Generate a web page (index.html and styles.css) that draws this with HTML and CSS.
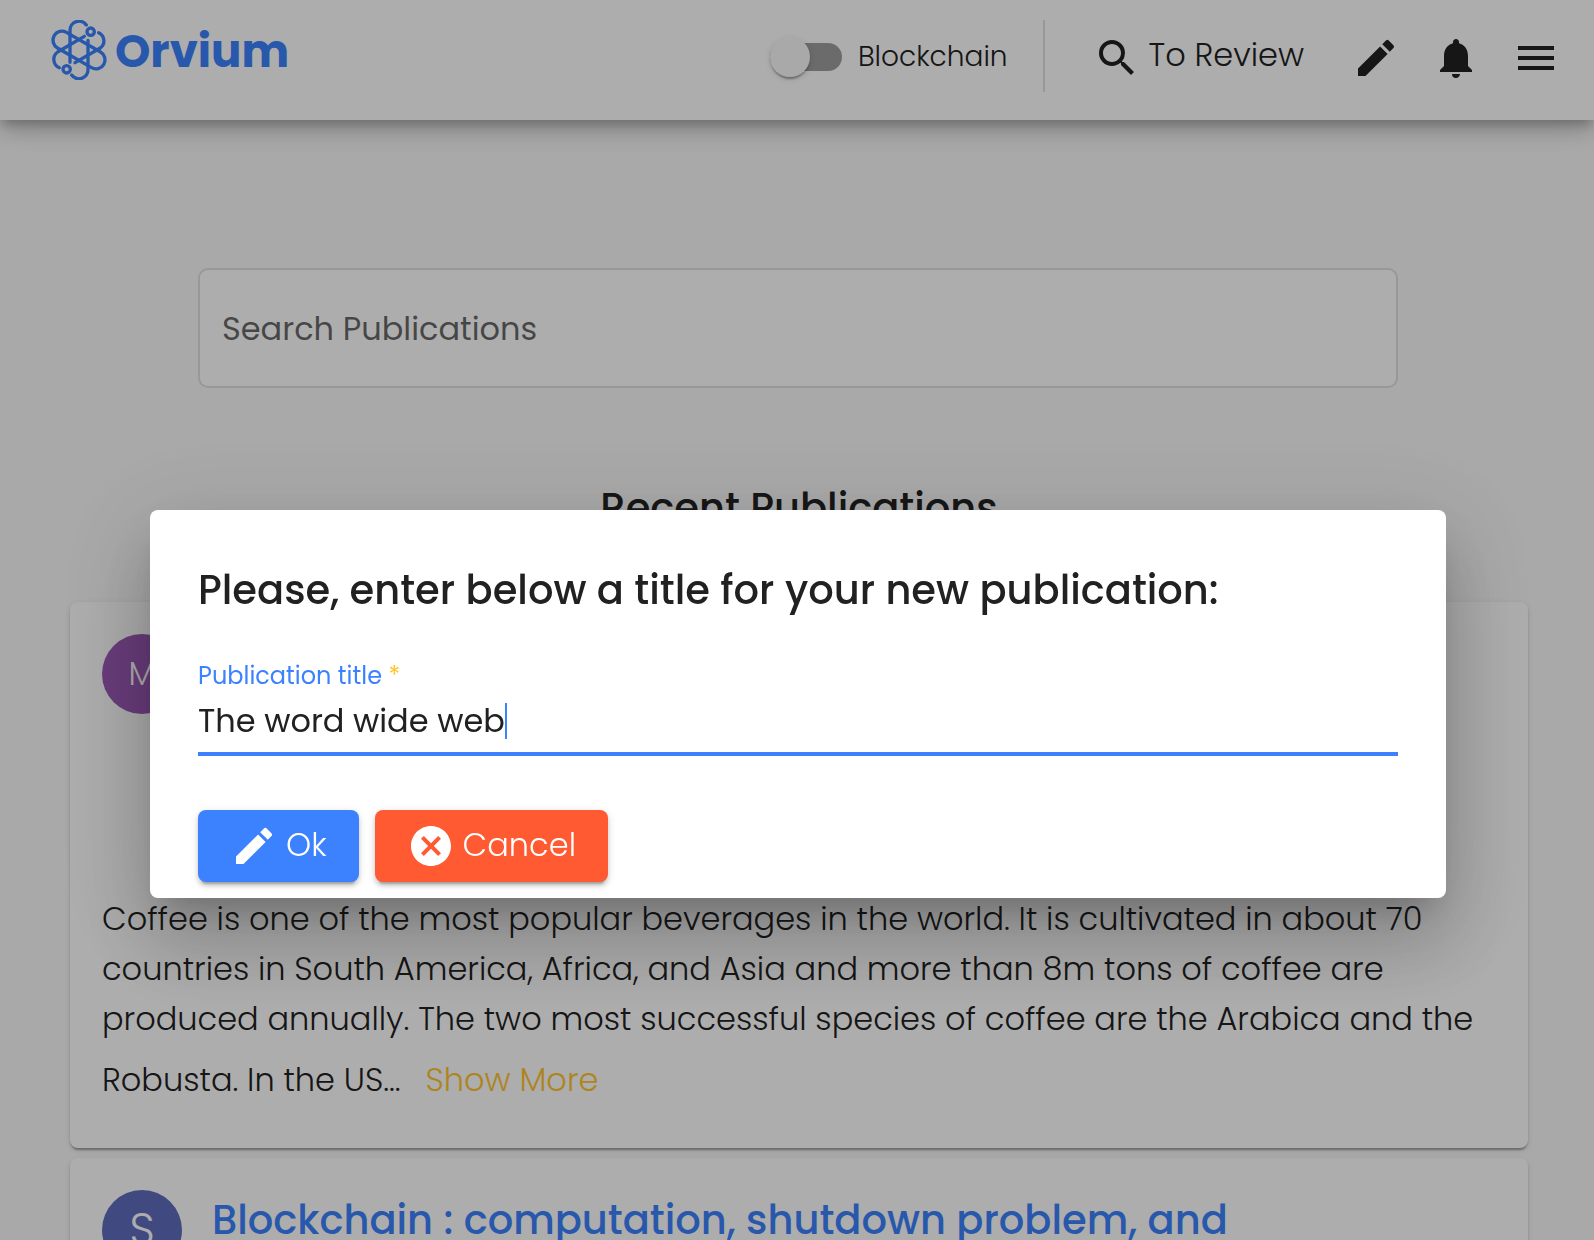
FILE: index.html
```html
<!DOCTYPE html>
<html lang="en">
<head>
    <meta charset="UTF-8">
    <meta name="viewport" content="width=device-width, initial-scale=1.0">
    <title>Orvium</title>
    <link rel="stylesheet" href="styles.css">
</head>
<body>

<header class="toolbar">
    <a class="logo" href="#">
        <svg class="logo-mark" viewBox="-90 -90 180 180" aria-hidden="true">
            <rect x="-86" y="-27" width="172" height="54" rx="27" transform="rotate(30)"/>
            <path d="M22 -75A27 27 0 0 0 -27 -59V37M-22 75A27 27 0 0 0 27 59V-29"/>
            <path d="M59 -52A27 27 0 0 1 64 -6L-12 38M-59 53A27 27 0 0 1 -64 6L16 -41"/>
            <circle cx="35" cy="-55" r="11"/>
            <circle cx="-37" cy="58" r="11"/>
        </svg>
        <span>Orvium</span>
    </a>

    <label class="toggle">
        <input type="checkbox" id="blockchain">
        <span>Blockchain</span>
    </label>

    <nav class="actions">
        <a class="review" href="#">
            <svg class="icon" viewBox="0 0 24 24" aria-hidden="true"><path d="M15.5 14h-.79l-.28-.27A6.471 6.471 0 0 0 16 9.5 6.5 6.5 0 1 0 9.5 16c1.61 0 3.09-.59 4.23-1.57l.27.28v.79l5 4.99L20.49 19l-4.99-5zm-6 0C7.01 14 5 11.99 5 9.5S7.01 5 9.5 5 14 7.01 14 9.5 11.99 14 9.5 14z"/></svg>
            <span class="review-text">To Review</span>
        </a>
        <button class="icon-button" aria-label="New publication">
            <svg class="icon" viewBox="0 0 24 24"><path d="M3 17.25V21h3.75L17.81 9.94l-3.75-3.75L3 17.25zM20.71 7.04a.996.996 0 0 0 0-1.41l-2.34-2.34a.996.996 0 0 0-1.41 0l-1.83 1.83 3.75 3.75 1.83-1.83z"/></svg>
        </button>
        <button class="icon-button" aria-label="Notifications">
            <svg class="icon" viewBox="0 0 24 24"><path d="M12 22c1.1 0 2-.9 2-2h-4a2 2 0 0 0 2 2zm6-6v-5c0-3.07-1.64-5.64-4.5-6.32V4c0-.83-.67-1.5-1.5-1.5s-1.5.67-1.5 1.5v.68C7.63 5.36 6 7.92 6 11v5l-2 2v1h16v-1l-2-2z"/></svg>
        </button>
        <button class="icon-button" aria-label="Menu">
            <svg class="icon" viewBox="0 0 24 24"><path d="M3 18h18v-2H3v2zm0-5h18v-2H3v2zm0-7v2h18V6H3z"/></svg>
        </button>
    </nav>
</header>

<main class="content">
    <input class="search" type="search" placeholder="Search Publications" aria-label="Search Publications">

    <h2 class="section-title">Recent Publications</h2>

    <article class="card">
        <div class="card-head card-head-tall">
            <div class="avatar avatar-purple">M</div>
        </div>
        <p class="abstract">Coffee is one of the most popular beverages in the world. It is cultivated in about 70 countries in South America, Africa, and Asia and more than 8m tons of coffee are produced annually. The two most successful species of coffee are the Arabica and the Robusta. In the US... <button class="show-more">Show More</button></p>
    </article>

    <article class="card">
        <div class="card-head">
            <div class="avatar avatar-indigo">S</div>
            <h3 class="card-title"><a href="#">Blockchain : computation, shutdown problem, and</a></h3>
        </div>
    </article>
</main>

<div class="backdrop">
    <form class="dialog" role="dialog" aria-labelledby="dialogTitle">
        <h1 class="dialog-title" id="dialogTitle">Please, enter below a title for your new publication:</h1>

        <label class="field-label" for="title">Publication title <span class="required">*</span></label>
        <div class="field">
            <input type="text" id="title" value="The word wide web" required>
            <span class="caret"></span>
        </div>

        <div class="dialog-buttons">
            <button class="button primary" type="button">
                <svg class="icon" viewBox="0 0 24 24" aria-hidden="true"><path d="M3 17.25V21h3.75L17.81 9.94l-3.75-3.75L3 17.25zM20.71 7.04a.996.996 0 0 0 0-1.41l-2.34-2.34a.996.996 0 0 0-1.41 0l-1.83 1.83 3.75 3.75 1.83-1.83z"/></svg>
                <span>Ok</span>
            </button>
            <button class="button warn" type="button">
                <svg class="icon" viewBox="0 0 24 24" aria-hidden="true"><path d="M12 2C6.47 2 2 6.47 2 12s4.47 10 10 10 10-4.47 10-10S17.53 2 12 2zm5 13.59L15.59 17 12 13.41 8.41 17 7 15.59 10.59 12 7 8.41 8.41 7 12 10.59 15.59 7 17 8.41 13.41 12 17 15.59z"/></svg>
                <span>Cancel</span>
            </button>
        </div>
    </form>
</div>

</body>
</html>
```
FILE: styles.css
```css
* {
    box-sizing: border-box;
}

body {
    margin: 0;
    height: 100vh;
    overflow: hidden;
    background: #fafafa;
    color: #212121;
    font-family: Poppins, Inter, sans-serif;
    font-size: 32px;
    font-weight: 300;
}

h1, h2, h3, p {
    margin: 0;
}

a {
    color: inherit;
    text-decoration: none;
}

button, input {
    font: inherit;
    color: inherit;
}

button {
    padding: 0;
    border: none;
    background: none;
    cursor: pointer;
}

.icon {
    display: block;
    flex: none;
    width: 48px;
    height: 48px;
    fill: currentColor;
}

/* toolbar */
.toolbar {
    position: relative;
    display: flex;
    align-items: flex-start;
    height: 120px;
    padding: 20px 34px 0 49px;
    background: #fff;
    box-shadow: 0 6px 10px -2px rgba(0, 0, 0, 0.2), 0 12px 20px 0 rgba(0, 0, 0, 0.14), 0 2px 36px 0 rgba(0, 0, 0, 0.12);
}

.logo {
    display: flex;
    align-items: flex-start;
    gap: 6px;
    margin-right: auto;
    color: #3c82fe;
    font-size: 45px;
    font-weight: 700;
    line-height: 64px;
}

.logo-mark {
    width: 60px;
    height: 60px;
    fill: none;
    stroke: currentColor;
    stroke-width: 10;
    stroke-linecap: round;
}

.toggle {
    display: flex;
    align-items: center;
    gap: 16px;
    height: 74px;
    padding-right: 35px;
    font-size: 28px;
}

.toggle input {
    appearance: none;
    display: flex;
    align-items: center;
    width: 72px;
    height: 28px;
    margin: 0;
    border-radius: 14px;
    background: rgba(0, 0, 0, 0.38);
}

.toggle input::before {
    content: "";
    width: 40px;
    height: 40px;
    border-radius: 50%;
    background: #fafafa;
    box-shadow: 0 4px 2px -2px rgba(0, 0, 0, 0.2), 0 2px 2px 0 rgba(0, 0, 0, 0.14), 0 2px 6px 0 rgba(0, 0, 0, 0.12);
}

.toggle input:checked {
    justify-content: flex-end;
}

.actions {
    display: flex;
    align-items: center;
    gap: 32px;
    height: 72px;
    padding: 4px 0 0 48px;
    border-left: 2px solid rgba(0, 0, 0, 0.12);
}

.review {
    display: flex;
    align-items: center;
    gap: 8px;
    padding-right: 16px;
}

.review-text {
    padding-bottom: 6px;
}

/* page */
.content {
    padding: 148px 66px 0 70px;
}

.search {
    display: block;
    width: calc(100% - 258px);
    height: 120px;
    margin-left: 128px;
    padding: 2px 22px 0;
    border: 2px solid rgba(0, 0, 0, 0.12);
    border-radius: 10px;
    background: #fff;
    font-weight: 400;
}

.search::placeholder {
    color: rgba(0, 0, 0, 0.6);
}

.section-title {
    margin: 96px 0 70px;
    font-size: 40px;
    font-weight: 500;
    line-height: 48px;
    text-align: center;
}

.card {
    margin-bottom: 10px;
    padding: 32px;
    border-radius: 8px;
    background: #fff;
    box-shadow: 0 4px 2px -2px rgba(0, 0, 0, 0.2), 0 2px 2px 0 rgba(0, 0, 0, 0.14), 0 2px 6px 0 rgba(0, 0, 0, 0.12);
}

.card-head {
    display: flex;
    align-items: flex-start;
    gap: 30px;
}

.card-head-tall {
    min-height: 260px;
}

.avatar {
    flex: none;
    width: 80px;
    border-radius: 50%;
    color: #fff;
    line-height: 80px;
    text-align: center;
}

.avatar-purple {
    background: #9b59b6;
}

.avatar-indigo {
    background: #5f6ebd;
    font-size: 44px;
}

.card-title {
    color: #3c82fe;
    font-size: 40px;
    font-weight: 500;
    line-height: 60px;
}

.abstract {
    line-height: 50px;
}

.show-more {
    height: 72px;
    padding: 0 16px;
    color: #ffc42f;
    line-height: 70px;
}

/* dialog */
.backdrop {
    position: fixed;
    inset: 0;
    padding: 510px 148px 0 150px;
    background: rgba(0, 0, 0, 0.32);
}

.dialog {
    padding: 48px 48px 16px;
    border-radius: 8px;
    background: #fff;
    box-shadow: 0 22px 30px -14px rgba(0, 0, 0, 0.2), 0 48px 76px 6px rgba(0, 0, 0, 0.14), 0 18px 92px 16px rgba(0, 0, 0, 0.12);
}

.dialog-title {
    margin-bottom: 38px;
    font-size: 40px;
    font-weight: 500;
    line-height: 64px;
}

.field-label {
    display: block;
    color: #3c82fe;
    font-size: 24px;
    font-weight: 400;
    line-height: 32px;
}

.required {
    color: #ffc42f;
}

.field {
    display: flex;
    align-items: center;
    height: 64px;
    padding-bottom: 2px;
    border-bottom: 4px solid #3c82fe;
}

.field input {
    field-sizing: content;
    padding: 0;
    border: none;
    outline: none;
    background: none;
    font-weight: 400;
}

.caret {
    width: 2px;
    height: 36px;
    background: #3c82fe;
}

.dialog-buttons {
    display: flex;
    gap: 16px;
    margin-top: 54px;
}

.button {
    display: flex;
    align-items: center;
    gap: 8px;
    height: 72px;
    padding: 0 32px;
    border-radius: 8px;
    color: #fff;
    box-shadow: 0 6px 2px -4px rgba(0, 0, 0, 0.2), 0 4px 4px 0 rgba(0, 0, 0, 0.14), 0 2px 10px 0 rgba(0, 0, 0, 0.12);
}

.button span {
    padding-bottom: 2px;
}

.primary {
    background: #3c82fe;
}

.warn {
    background: #ff5a32;
}
```
